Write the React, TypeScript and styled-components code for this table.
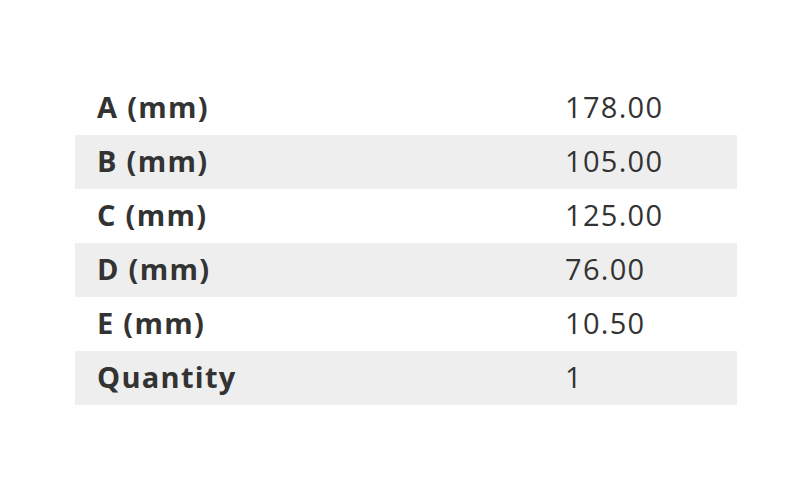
import React from "react";
import styled, { createGlobalStyle } from "styled-components";

const Global = createGlobalStyle`
  html, body { margin: 0; padding: 0; background: #ffffff; }
  body { font-family: "Open Sans", "Liberation Sans", sans-serif; }
`;

const Page = styled.div`
  width: 800px;
  height: 500px;
  padding: 81px 63px 0 75px;
  box-sizing: border-box;
`;

const Table = styled.div`
  display: grid;
  grid-template-columns: 468px 1fr;
  width: 662px;
`;

const Cell = styled.div<{ $shade: boolean; $bold?: boolean }>`
  height: 54px;
  display: flex;
  align-items: center;
  padding: 0 0 3px 22px;
  box-sizing: border-box;
  background: ${(p) => (p.$shade ? "#eeeeee" : "#ffffff")};
  font-size: 29px;
  letter-spacing: 1.3px;
  font-weight: ${(p) => (p.$bold ? 700 : 400)};
  color: #333333;
  white-space: nowrap;
`;

const rows: [string, string][] = [
  ["A (mm)", "178.00"],
  ["B (mm)", "105.00"],
  ["C (mm)", "125.00"],
  ["D (mm)", "76.00"],
  ["E (mm)", "10.50"],
  ["Quantity", "1"],
];

export default function App() {
  return (
    <>
      <Global />
      <Page>
        <Table>
          {rows.map(([k, v], i) => (
            <React.Fragment key={k}>
              <Cell $shade={i % 2 === 1} $bold>
                {k}
              </Cell>
              <Cell $shade={i % 2 === 1}>{v}</Cell>
            </React.Fragment>
          ))}
        </Table>
      </Page>
    </>
  );
}
